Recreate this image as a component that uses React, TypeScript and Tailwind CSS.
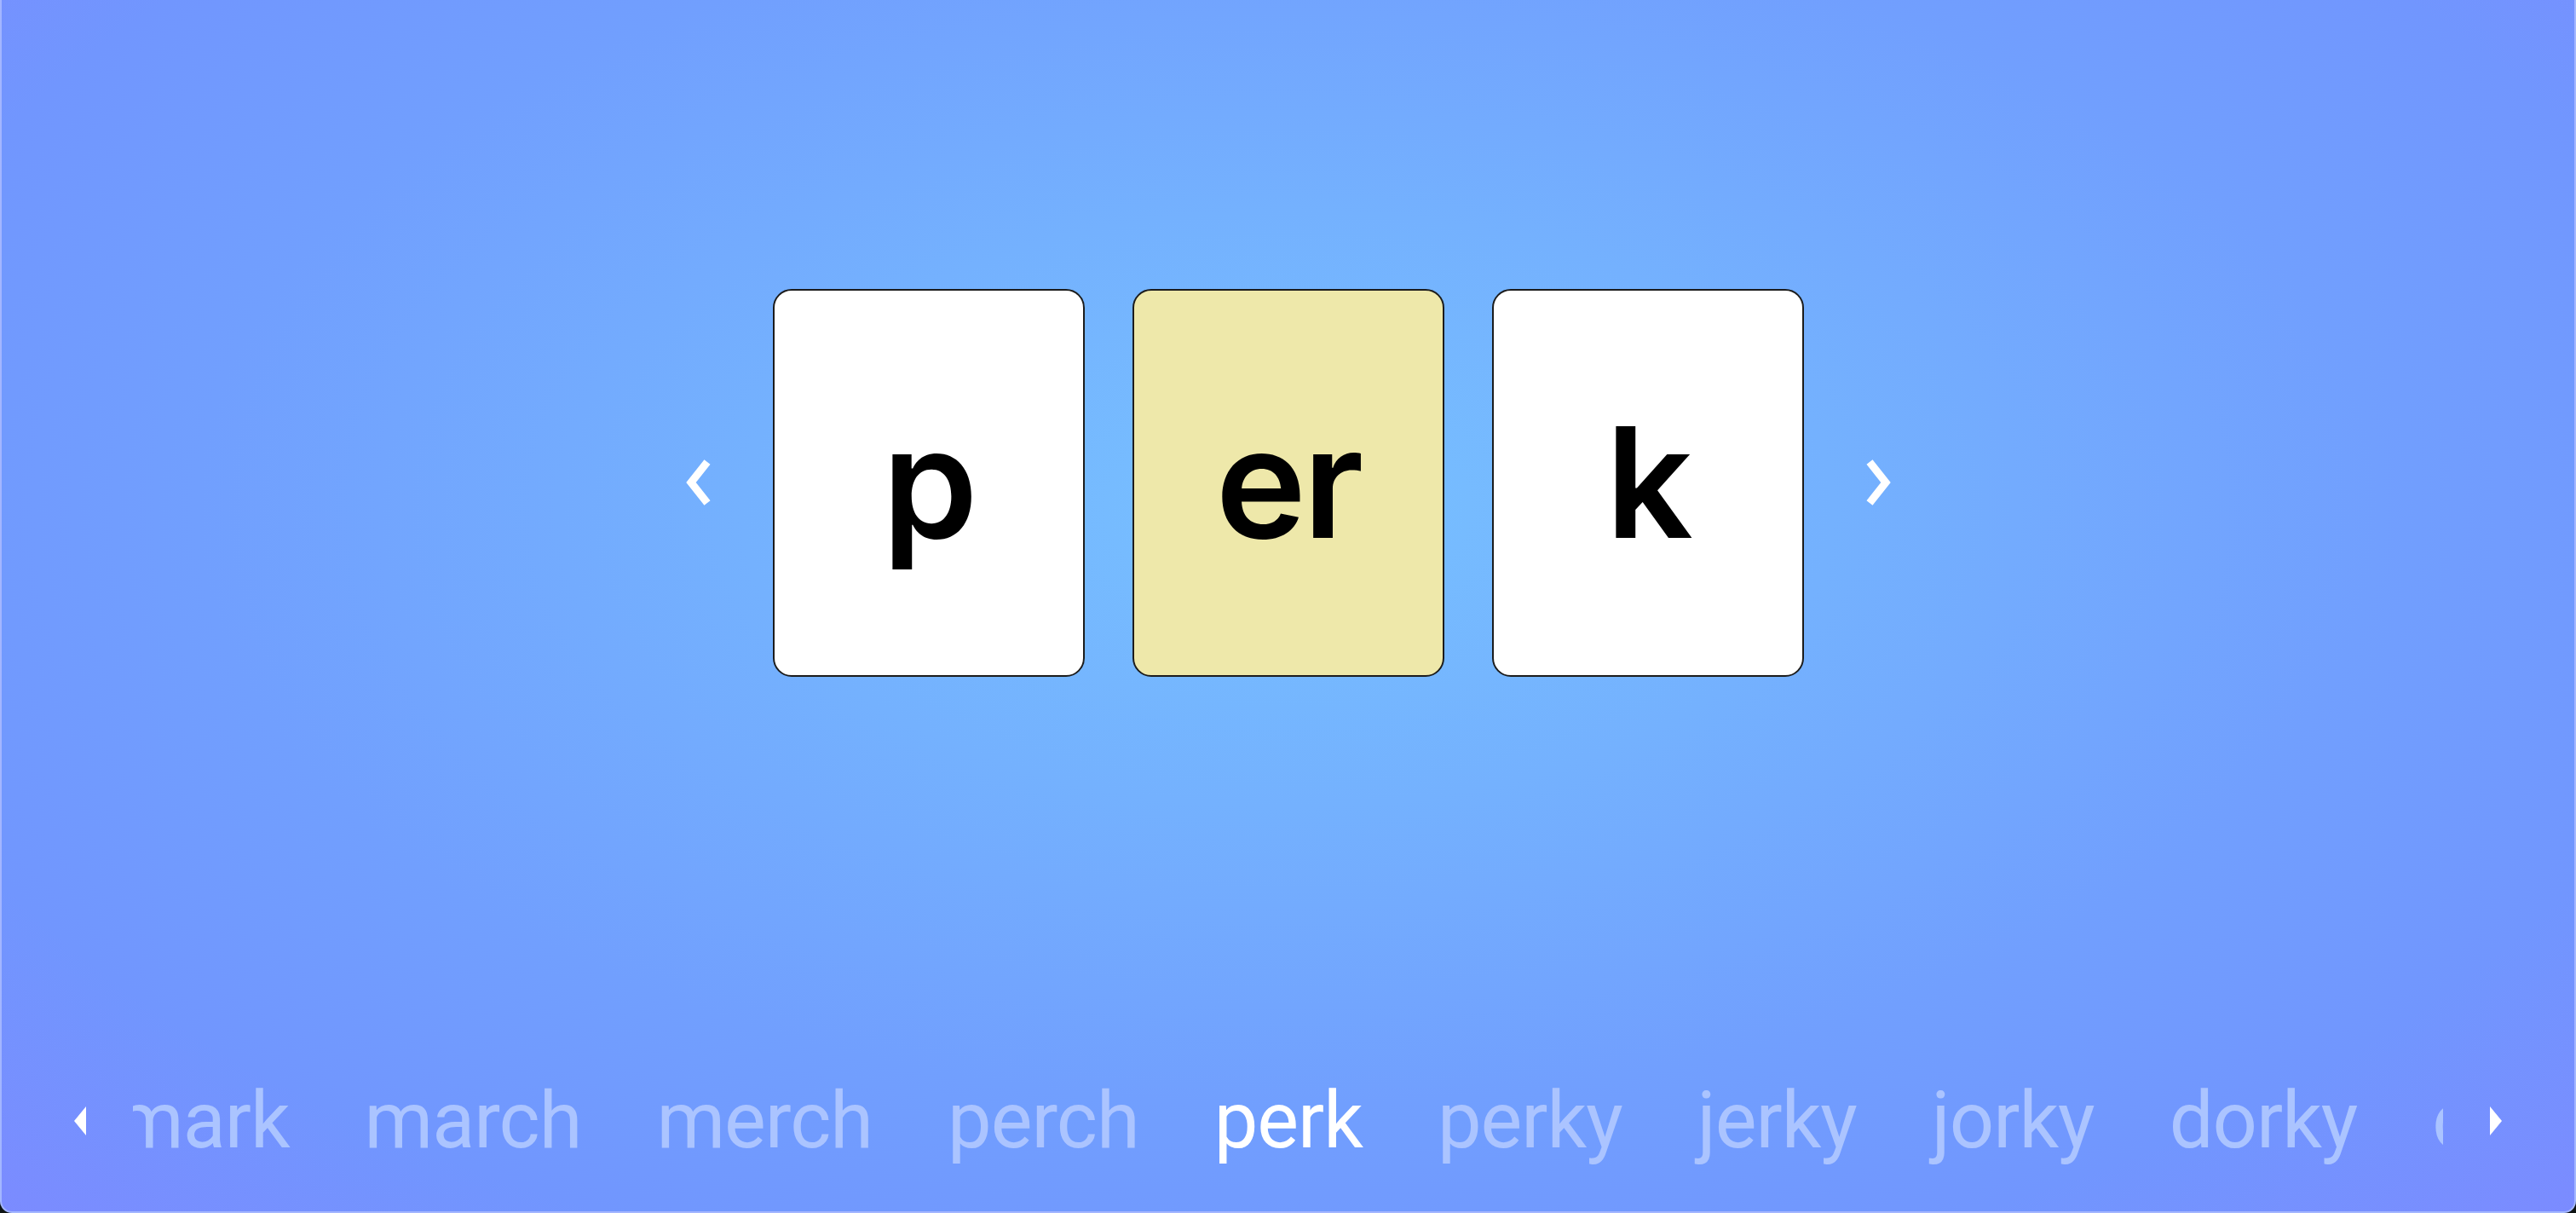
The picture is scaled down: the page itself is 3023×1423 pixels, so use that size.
const words = ["mark", "march", "merch", "perch", "perk", "perky", "jerky", "jorky", "dorky", "corky"];
const active = "perk";

function Chevron({ dir }: { dir: "left" | "right" }) {
  const d = dir === "left" ? "M27 5 L8 29 L27 53" : "M5 5 L24 29 L5 53";
  return (
    <svg width="32" height="58" viewBox="0 0 32 58" className="shrink-0 overflow-visible">
      <path d={d} fill="none" stroke="#ffffff" strokeWidth="9" strokeLinejoin="miter" />
    </svg>
  );
}

function Triangle({ dir }: { dir: "left" | "right" }) {
  const points = dir === "left" ? "15,1 1,18 15,35" : "1,1 15,18 1,35";
  return (
    <svg width="16" height="36" viewBox="0 0 16 36" className="shrink-0">
      <polygon points={points} fill="white" />
    </svg>
  );
}

function Card({ text, highlight }: { text: string; highlight?: boolean }) {
  return (
    <div
      className={`flex h-[455px] w-[366px] items-center justify-center rounded-[22px] border-2 border-[#1c1c1c] ${
        highlight ? "bg-[#eee8aa]" : "bg-white"
      }`}
    >
      <span className="font-['Inter',sans-serif] text-[180px] font-semibold tracking-[-4px] text-black">
        {text}
      </span>
    </div>
  );
}

export default function App() {
  return (
    <div className="h-[1423px] w-full bg-[#0e1414]">
      <div className="flex h-full w-full flex-col overflow-hidden rounded-b-[14px] border-x-2 border-b-2 border-[#a3b6ff] bg-[radial-gradient(ellipse_at_50%_42%,#77c0ff_0%,#74b1fe_30%,#719ffe_60%,#7196fe_80%,#7b8bff_100%)]">
        <div className="flex h-[1130px] items-center justify-center gap-[72px] pt-[2px]">
          <Chevron dir="left" />
          <div className="flex gap-[56px]">
            <Card text="p" />
            <Card text="er" highlight />
            <Card text="k" />
          </div>
          <Chevron dir="right" />
        </div>

        <div className="flex items-center px-[84px] pt-[131px]">
          <Triangle dir="left" />
          <div className="mx-[54px] flex-1 overflow-hidden">
            <div className="ml-[-21px] flex gap-[88px] whitespace-nowrap font-['Roboto',sans-serif] text-[92px] leading-[1.172] tracking-[-1px]">
              {words.map((w) => (
                <span key={w} className={w === active ? "text-white" : "text-[#abc4ff]"}>
                  {w}
                </span>
              ))}
            </div>
          </div>
          <Triangle dir="right" />
        </div>
      </div>
    </div>
  );
}
